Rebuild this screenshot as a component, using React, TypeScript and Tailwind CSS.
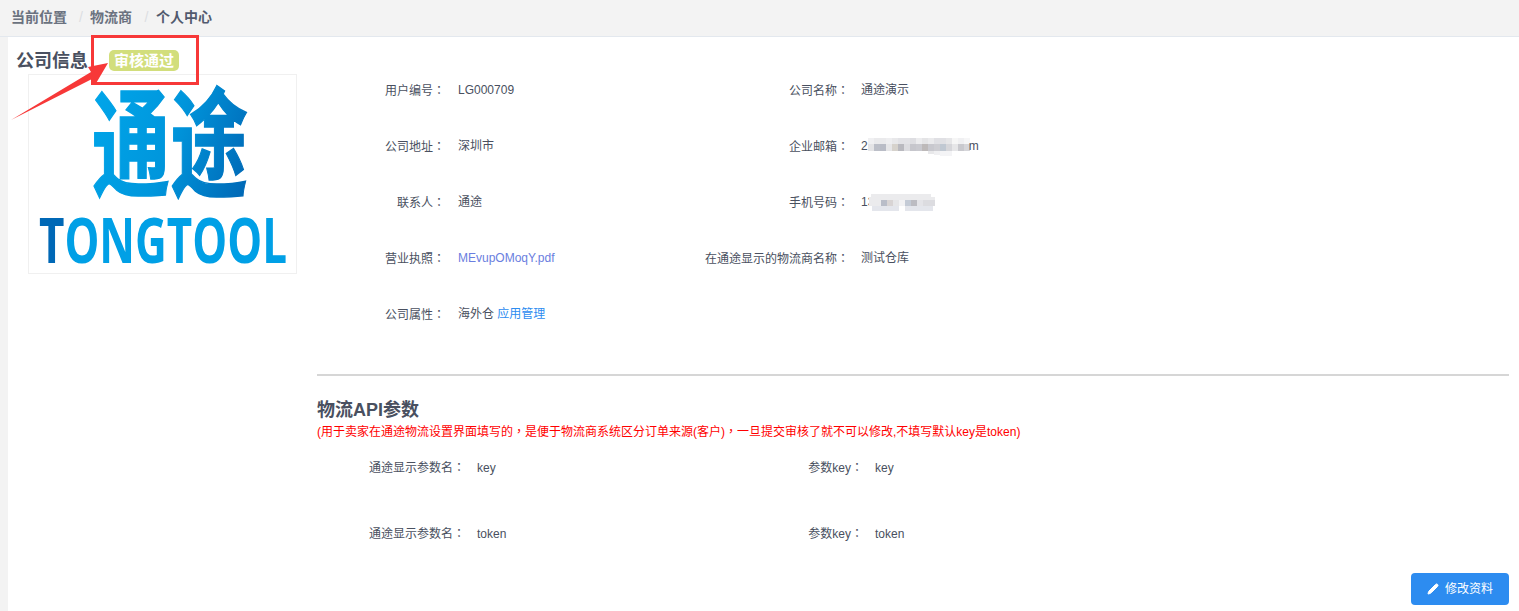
import React from "react";
import { Pencil } from "lucide-react";

const FONT = "[font-family:'Liberation_Sans','Noto_Sans_CJK_SC',sans-serif]";
const TC = "[font-family:'Noto_Sans_CJK_TC',sans-serif]";

type Cell = [number, number, number, number, string];

function Mosaic({ cells, w, h, overlap }: { cells: Cell[]; w: number; h: number; overlap?: boolean }) {
  return (
    <svg width={w} height={h} viewBox={`0 0 ${w} ${h}`} className={overlap ? "block -ml-[5px]" : "block"} aria-hidden>
      {cells.map((c, i) => (
        <rect key={i} x={c[0]} y={c[1]} width={c[2]} height={c[3]} fill={c[4]} />
      ))}
    </svg>
  );
}

const emailMid = ["#e4e4e6", "#bcbfc8", "#b9bcc6", "#e6e6e8", "#d6d2cc", "#b9b9bf", "#dcdce0", "#c6c6cc", "#c9c9cf", "#bdb9b9", "#c8c8ce", "#cdcdd2", "#c0c8d2", "#d6d6da", "#e6e6e8", "#c9c9ce", "#d6d6da"];
const emailTop = ["#f0f0f2", "#eaeaec", "#eaeaec", "#eeeef0", "#e8e8ea", "#e2e2e6", "#e2e2e6", "#dedee2", "#ececee", "#e4e4e6", "#eaeaec", "#e0e0e4", "#e0e0e4", "#e6e6e8", "#f6f6f6", "#f0f0f2", "#f6f6f7"];
const emailCells: Cell[] = [
  ...emailTop.map((c, i): Cell => [i * 6, 1, 6, 6, c]),
  ...emailMid.map((c, i): Cell => [i * 6, 7, 6, 7, c]),
  [60, 14, 6, 3, "#e8e8ea"],
  [66, 14, 6, 4, "#f0f0f2"],
  [72, 14, 12, 5, "#f4f4f6"],
];

const phoneMid = ["#ebebed", "#ebebed", "#b9bdc8", "#d8d4d4", "#e6e6e8", "#f2f2f4", "#c4cbd6", "#bcbcc2", "#e4e4e8", "#dcdce0", "#dcdce0"];
const phoneCells: Cell[] = [
  [2, 1, 60, 6, "#ebebed"],
  [0, 4, 66, 3, "#ebebed"],
  ...phoneMid.map((c, i): Cell => [i * 6, 7, 6, 6, c]),
  [3, 13, 27, 5, "#e4e6ec"],
  [36, 13, 28, 5, "#e4e6ec"],
];

function Label({ text }: { text: string }) {
  return (
    <>
      {text}
      <span className={TC}>：</span>
    </>
  );
}

function Row({ label, children, labelW, gap }: { label: string; children: React.ReactNode; labelW: string; gap: string }) {
  return (
    <div className={`flex items-center ${gap}`}>
      <div className={`${labelW} flex justify-end whitespace-nowrap shrink-0`}>
        <span>
          <Label text={label} />
        </span>
      </div>
      <div>{children}</div>
    </div>
  );
}

function Logo() {
  return (
    <svg viewBox="0 0 267 198" className="block w-full h-full">
      <defs>
        <linearGradient id="g1" gradientUnits="userSpaceOnUse" x1="0" y1="-70" x2="156" y2="6">
          <stop offset="0" stopColor="#00a6ea" />
          <stop offset="0.5" stopColor="#0096dc" />
          <stop offset="1" stopColor="#0066b4" />
        </linearGradient>
      </defs>
      <g transform="translate(63,113) scale(1,1.48)">
        <text
          x="0"
          y="0"
          fontFamily="'Noto Sans CJK SC', sans-serif"
          fontWeight="700"
          fontSize="80"
          fill="url(#g1)"
          stroke="url(#g1)"
          strokeWidth="1"
          textLength="156"
          lengthAdjust="spacingAndGlyphs"
        >
          通途
        </text>
      </g>
      <text
        x="10"
        y="188"
        fontFamily="'Open Sans', 'Liberation Sans', sans-serif"
        fontWeight="700"
        fontSize="63"
        fill="#00a0e6"
        textLength="248"
        lengthAdjust="spacingAndGlyphs"
      >
        <tspan fill="#0068b6">T</tspan>ONGTOOL
      </text>
    </svg>
  );
}

export default function App() {
  return (
    <div className={`relative h-[611px] w-full overflow-hidden bg-white text-[12px] leading-[18px] text-[#495060] ${FONT}`}>
      <div className="h-[37px] bg-[#f3f3f3] border-b border-[#e3e8ee] flex items-center pl-[11px] text-[14px] font-bold pb-[3px]">
        <span className="text-[#6b7280]">当前位置</span>
        <span className="w-[23px] pl-[5px] text-center text-[#dcdee2] font-normal">/</span>
        <span className="text-[#6b7280]">物流商</span>
        <span className="w-[24px] pl-[5px] text-center text-[#dcdee2] font-normal">/</span>
        <span className="text-[#515a6e]">个人中心</span>
      </div>

      <div className="flex h-[574px]">
        <div className="w-[8px] bg-[#f3f3f3] shrink-0" />
        <div className="flex flex-1 pr-[10px]">
          <div className="w-[309px] shrink-0">
            <div className="h-[37px] flex items-center pl-[9px] pt-[10px]">
              <span className="text-[18px] font-bold text-[#495060] w-[92px] shrink-0 -ml-[1px]">公司信息</span>
              <span className="h-[21px] w-[70px] rounded-[5px] bg-[#d2de7c] text-white text-[15px] font-bold flex items-center justify-center ml-[1px]">
                审核通过
              </span>
            </div>
            <div className="ml-[20px] w-[269px] h-[200px] border border-[#f0f0f0]">
              <Logo />
            </div>
          </div>

          <div className="flex-1 pt-[25px] flex flex-col">
            <div className="grid grid-cols-[404px_1fr] auto-rows-[56px] items-center">
              <Row label="用户编号" labelW="w-[128px]" gap="gap-[13px]">LG000709</Row>
              <Row label="公司名称" labelW="w-[128px]" gap="gap-[12px]">通途演示</Row>
              <Row label="公司地址" labelW="w-[128px]" gap="gap-[13px]">深圳市</Row>
              <Row label="企业邮箱" labelW="w-[128px]" gap="gap-[12px]">
                <span className="flex items-center">
                  <span>2</span>
                  <Mosaic cells={emailCells} w={102} h={19} />
                  <span className="-ml-[1px]">m</span>
                </span>
              </Row>
              <Row label="联系人" labelW="w-[128px]" gap="gap-[13px]">通途</Row>
              <Row label="手机号码" labelW="w-[128px]" gap="gap-[12px]">
                <span className="flex items-center">
                  <span>13</span>
                  <Mosaic cells={phoneCells} w={66} h={18} overlap />
                </span>
              </Row>
              <Row label="营业执照" labelW="w-[128px]" gap="gap-[13px]">
                <a className="text-[#6a7ee0]">MEvupOMoqY.pdf</a>
              </Row>
              <Row label="在通途显示的物流商名称" labelW="w-[128px]" gap="gap-[12px]">测试仓库</Row>
              <Row label="公司属性" labelW="w-[128px]" gap="gap-[13px]">
                <span>
                  海外仓 <a className="text-[#2d8cf0]">应用管理</a>
                </span>
              </Row>
            </div>

            <div className="mt-[32px] h-[2px] bg-[#d6d6d6]" />
            <h2 className="mt-[24px] text-[18px] leading-[20px] font-bold text-[#495060]">物流API参数</h2>
            <p className="mt-[2px] text-[#ff0000] leading-[18px]">
              (用于卖家在通途物流设置界面填写的<span className={TC}>，</span>是便于物流商系统区分订单来源(客户)<span className={TC}>，</span>一旦提交审核了就不可以修改,不填写默认key是token)
            </p>

            <div className="mt-[17px] grid grid-cols-[398px_1fr] auto-rows-[66px] items-start -mb-[24px]">
              <Row label="通途显示参数名" labelW="w-[148px]" gap="gap-[12px]">key</Row>
              <Row label="参数key" labelW="w-[148px]" gap="gap-[12px]">key</Row>
              <Row label="通途显示参数名" labelW="w-[148px]" gap="gap-[12px]">token</Row>
              <Row label="参数key" labelW="w-[148px]" gap="gap-[12px]">token</Row>
            </div>

            <div className="mt-auto mb-[6px] flex justify-end">
              <button className="h-[32px] w-[98px] rounded-[4px] bg-[#2d8cf0] text-white flex items-center justify-center gap-[6px] font-normal">
                <Pencil size={12} fill="white" strokeWidth={2} />
                修改资料
              </button>
            </div>
          </div>
        </div>
      </div>

      <div className="absolute left-[91px] top-[35px] w-[108px] h-[50px] border-[3px] border-[#f73838]" />
      <svg className="absolute left-0 top-0 pointer-events-none" width="130" height="130" viewBox="0 0 130 130">
        <polygon points="11,120 91,72 88,67 108,63 95,85 92,79" fill="#f73838" />
      </svg>
    </div>
  );
}
